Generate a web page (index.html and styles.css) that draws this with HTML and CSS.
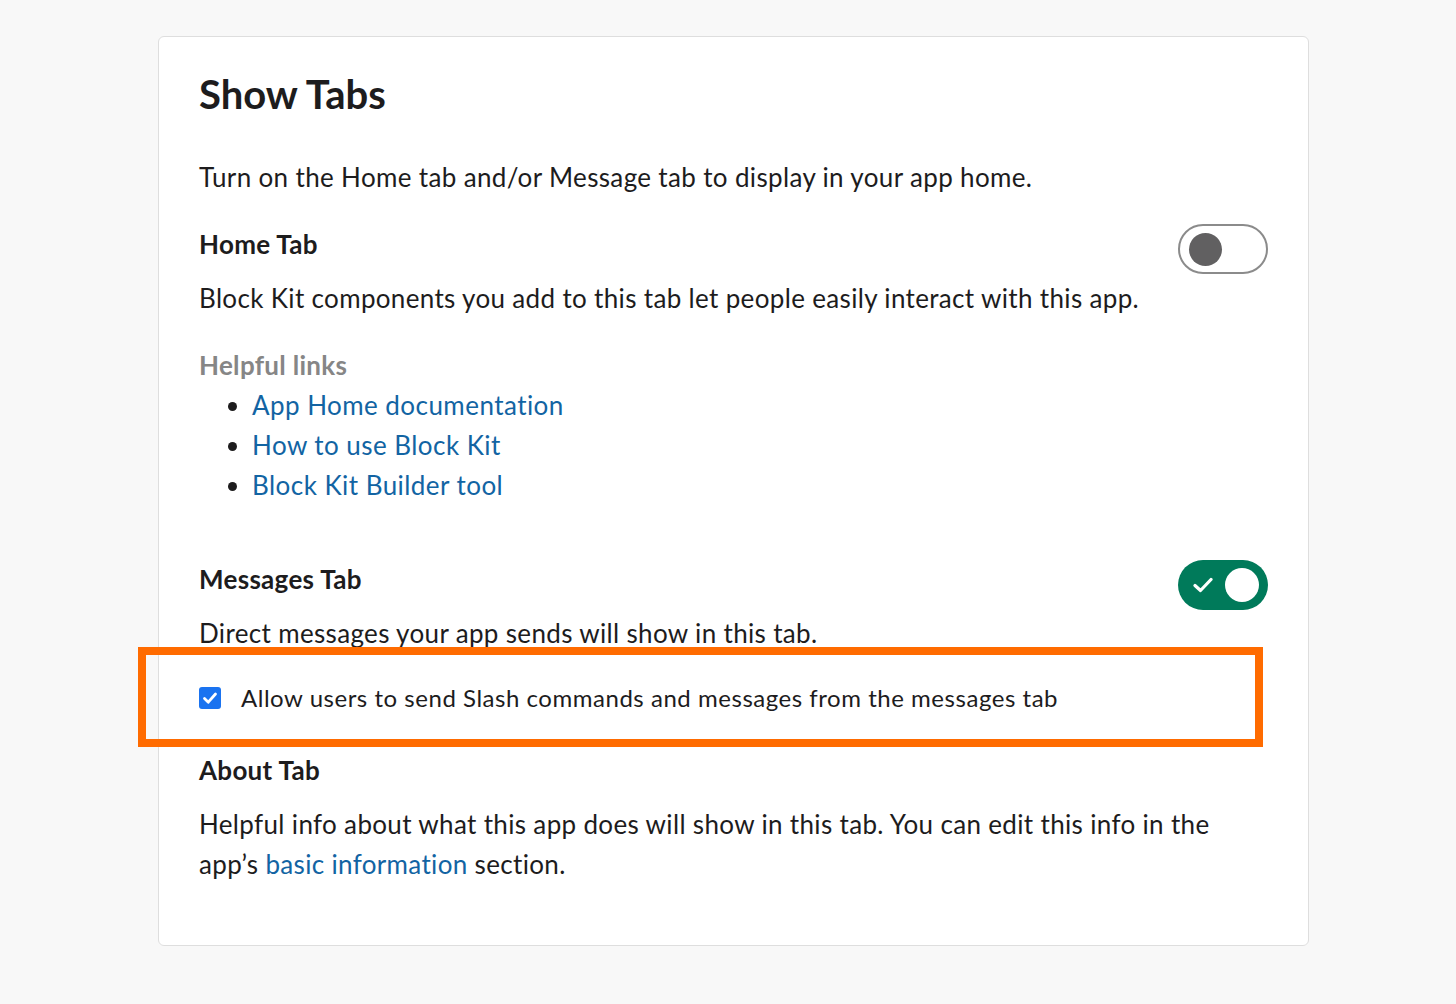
FILE: index.html
```html
<!DOCTYPE html>
<html lang="en">
<head>
<meta charset="utf-8">
<title>Show Tabs</title>
<link rel="stylesheet" href="styles.css">
</head>
<body>
<main class="card">
  <h1 class="title">Show Tabs</h1>
  <p class="intro">Turn on the Home tab and/or Message tab to display in your app home.</p>

  <section class="tab-section">
    <div class="tab-head">
      <h2 class="tab-name">Home Tab</h2>
      <span class="toggle toggle-off" role="switch" aria-checked="false"><span class="knob"></span></span>
    </div>
    <p class="desc">Block Kit components you add to this tab let people easily interact with this app.</p>
    <div class="links">
      <div class="links-title">Helpful links</div>
      <ul class="link-list">
        <li><a href="#">App Home documentation</a></li>
        <li><a href="#">How to use Block Kit</a></li>
        <li><a href="#">Block Kit Builder tool</a></li>
      </ul>
    </div>
  </section>

  <section class="tab-section messages">
    <div class="tab-head">
      <h2 class="tab-name">Messages Tab</h2>
      <span class="toggle toggle-on" role="switch" aria-checked="true">
        <svg class="tick" width="20" height="16" viewBox="0 0 20 16"><path d="M2 8.5 L7.5 13.5 L18 2.5" fill="none" stroke="#fff" stroke-width="3.2" stroke-linecap="round" stroke-linejoin="round"/></svg>
        <span class="knob"></span>
      </span>
    </div>
    <p class="desc">Direct messages your app sends will show in this tab.</p>
    <label class="check-row">
      <span class="checkbox"><svg width="22" height="22" viewBox="0 0 22 22"><path d="M5.5 11.5 L9.3 15.2 L16.5 7" fill="none" stroke="#fff" stroke-width="2.8" stroke-linecap="round" stroke-linejoin="round"/></svg></span>
      <span class="check-label">Allow users to send Slash commands and messages from the messages tab</span>
      <span class="highlight"></span>
    </label>
  </section>

  <section class="tab-section about">
    <h2 class="tab-name">About Tab</h2>
    <p class="desc">Helpful info about what this app does will show in this tab. You can edit this info in the app’s <a href="#">basic information</a> section.</p>
  </section>
</main>
</body>
</html>
```

FILE: styles.css
```css
* { box-sizing: border-box; }

html, body {
  margin: 0;
  padding: 0;
  background: #f8f8f8;
}

body {
  font-family: Lato, "Open Sans", sans-serif;
  color: #1d1c1d;
  padding-top: 36px;
}

.card {
  margin-left: 158px;
  width: 1151px;
  background: #ffffff;
  border: 1px solid #dedede;
  border-radius: 6px;
  padding: 33px 40px 61px 40px;
  display: flex;
  flex-direction: column;
}

.title {
  margin: 0;
  font-size: 40px;
  line-height: 48px;
  font-weight: 700;
  letter-spacing: 0px;
}

.intro {
  margin: 39px 0 0 0;
  font-size: 26px;
  line-height: 40px;
  letter-spacing: 0.35px;
}

.tab-section {
  display: flex;
  flex-direction: column;
  margin-top: 27px;
}

.tab-section.messages { margin-top: 54px; }
.tab-section.about { margin-top: 32px; }

.tab-head {
  display: flex;
  justify-content: space-between;
  align-items: flex-start;
  height: 40px;
}

.tab-name {
  margin: 0;
  font-size: 26px;
  line-height: 40px;
  font-weight: 700;
  letter-spacing: 0.3px;
}

.desc {
  margin: 14px 0 0 0;
  font-size: 26px;
  line-height: 40px;
  letter-spacing: 0.34px;
}

.desc a, .link-list a {
  color: #1264a3;
  text-decoration: none;
}

.toggle {
  flex: none;
  width: 90px;
  height: 50px;
  border-radius: 25px;
  display: flex;
  align-items: center;
}

.toggle-off {
  border: 2px solid #8b8b8b;
  background: #ffffff;
  padding-left: 9px;
}

.toggle-off .knob {
  width: 33px;
  height: 33px;
  border-radius: 50%;
  background: #616061;
}

.toggle-on {
  margin-top: 1px;
  background: #007a5a;
  justify-content: space-between;
  padding: 0 9px 0 15px;
}

.toggle-on .tick { display: block; }

.toggle-on .knob {
  width: 34px;
  height: 34px;
  border-radius: 50%;
  background: #ffffff;
}

.links {
  margin-top: 27px;
  display: flex;
  flex-direction: column;
}

.links-title {
  font-size: 26px;
  line-height: 40px;
  font-weight: 700;
  color: #868686;
  letter-spacing: 0.3px;
}

.link-list {
  list-style: none;
  margin: 0;
  padding: 0;
}

.link-list li {
  position: relative;
  font-size: 26px;
  line-height: 40px;
  padding-left: 53px;
  letter-spacing: 0.45px;
}

.link-list li::before {
  content: "";
  position: absolute;
  left: 29px;
  top: 17px;
  width: 9px;
  height: 9px;
  border-radius: 50%;
  background: #1d1c1d;
}

.check-row {
  position: relative;
  margin-top: 25px;
  display: flex;
  align-items: center;
  gap: 20px;
  height: 40px;
}

.checkbox {
  flex: none;
  width: 22px;
  height: 22px;
  border-radius: 3px;
  background: #1a73f0;
  display: flex;
}

.check-label {
  font-size: 24px;
  line-height: 40px;
  letter-spacing: 0.53px;
}

.highlight {
  position: absolute;
  left: -61px;
  top: -31px;
  width: 1125px;
  height: 100px;
  border: 8px solid #ff6b00;
  pointer-events: none;
}
```
